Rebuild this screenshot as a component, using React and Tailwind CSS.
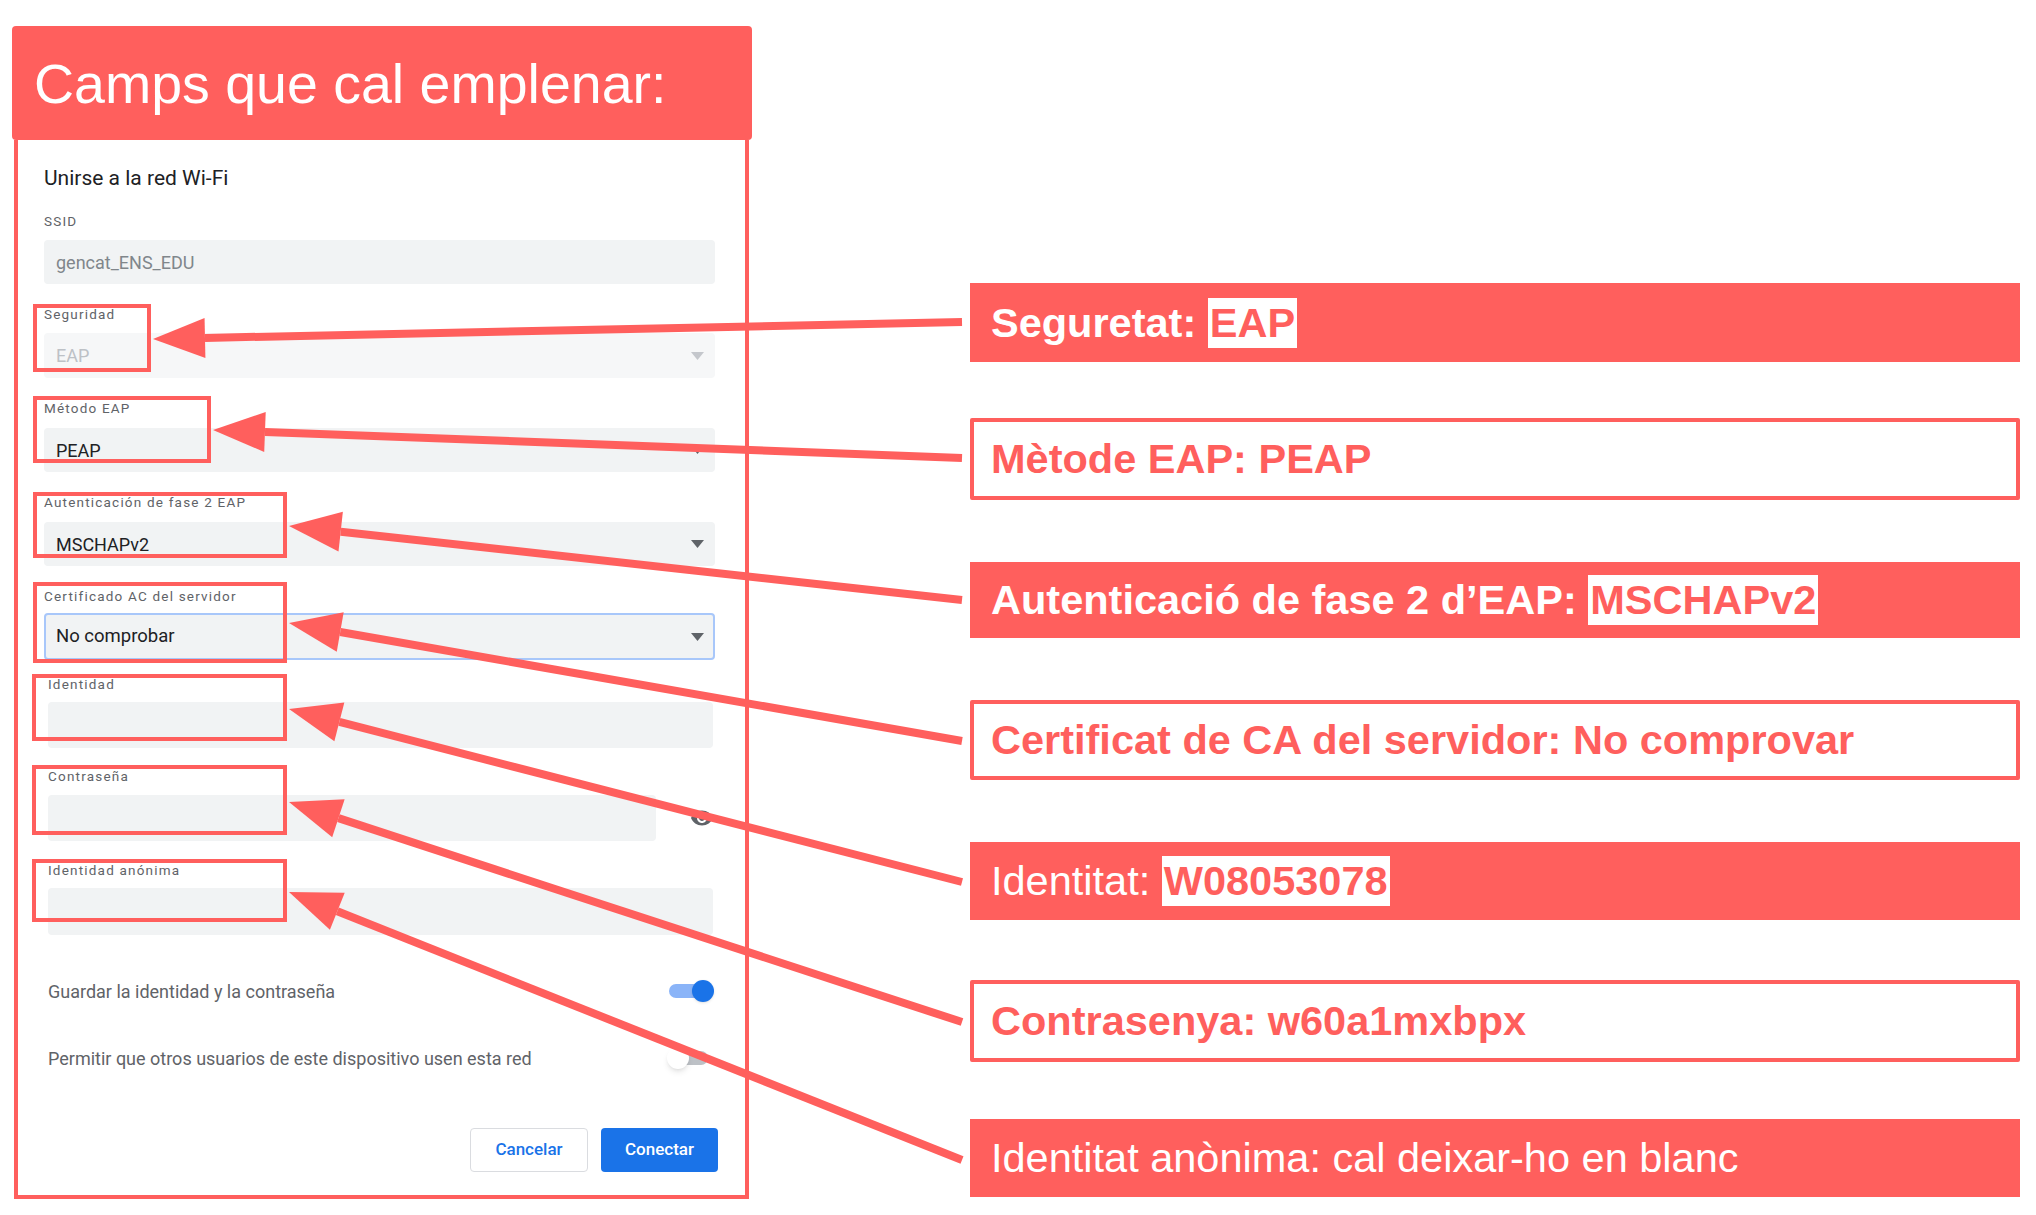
import React from 'react';

const RED = '#ff5f5d';

// callouts on the right: kind = filled | outlined
const callouts = [
  { h: 79, mt: 283, filled: true, label: 'Seguretat:', value: 'EAP', bold: true },
  { h: 82, mt: 56, filled: false, label: 'Mètode EAP:', value: 'PEAP', bold: true },
  { h: 76, mt: 62, filled: true, label: 'Autenticació de fase 2 d’EAP:', value: 'MSCHAPv2', bold: true },
  { h: 80, mt: 62, filled: false, label: 'Certificat de CA del servidor:', value: 'No comprovar', bold: true },
  { h: 78, mt: 62, filled: true, label: 'Identitat:', value: 'W08053078', bold: false },
  { h: 82, mt: 60, filled: false, label: 'Contrasenya:', value: 'w60a1mxbpx', bold: true },
  { h: 78, mt: 57, filled: true, label: 'Identitat anònima: cal deixar-ho en blanc', value: null, bold: false },
];

// arrows: start at callout edge, tip at the red label box
const arrows = [
  [962, 322, 153, 339],
  [962, 458, 213, 430],
  [962, 600, 289, 526],
  [962, 741, 289, 623],
  [962, 882, 289, 709],
  [962, 1022, 289, 802],
  [962, 1160, 289, 892],
];

const boxes = [
  [33, 304, 151, 372],
  [33, 396, 211, 463],
  [33, 492, 287, 558],
  [33, 582, 287, 663],
  [32, 674, 287, 741],
  [32, 765, 287, 835],
  [32, 859, 287, 922],
];

function Chevron({ light }) {
  return (
    <svg width="13" height="8" viewBox="0 0 13 8">
      <path d="M0 0h13L6.5 8z" fill={light ? '#c4c7cc' : '#5f6368'} />
    </svg>
  );
}

function Label({ children, className = '' }) {
  return (
    <div className={`text-[13.5px] leading-[16px] tracking-[1.2px] text-[#5f6368] ${className}`}>
      {children}
    </div>
  );
}

function Annotations() {
  return (
    <svg className="absolute inset-0 pointer-events-none" width="2036" height="1215" viewBox="0 0 2036 1215">
      {boxes.map(([x1, y1, x2, y2], i) => (
        <rect key={i} x={x1 + 2} y={y1 + 2} width={x2 - x1 - 4} height={y2 - y1 - 4} fill="none" stroke={RED} strokeWidth="4" />
      ))}
      {arrows.map(([sx, sy, tx, ty], i) => {
        const dx = sx - tx;
        const dy = sy - ty;
        const len = Math.hypot(dx, dy);
        const ux = dx / len;
        const uy = dy / len;
        const bx = tx + ux * 52;
        const by = ty + uy * 52;
        const px = -uy * 20;
        const py = ux * 20;
        return (
          <g key={i}>
            <line x1={sx} y1={sy} x2={bx} y2={by} stroke={RED} strokeWidth="8" />
            <polygon points={`${tx},${ty} ${bx + px},${by + py} ${bx - px},${by - py}`} fill={RED} />
          </g>
        );
      })}
    </svg>
  );
}

export default function App() {
  return (
    <div className="relative w-[2036px] h-[1215px] bg-white overflow-hidden flex">
      {/* Left: header + dialog */}
      <div className="w-[752px] shrink-0 pl-[12px] pt-[26px]">
        <div className="w-[740px] h-[114px] rounded-[4px] bg-[#ff5f5d] flex items-center pl-[22px] pt-[3px]">
          <span className="text-white text-[55.5px] leading-none font-['Liberation_Sans',Arial,sans-serif]">
            Camps que cal emplenar:
          </span>
        </div>

        <div className="ml-[2px] w-[735px] h-[1059px] border-x-4 border-b-4 border-[#ff5f5d] font-['Roboto',sans-serif] pt-[26px]">
          <div className="pl-[26px] pr-[30px]">
            <div className="text-[21px] leading-[24px] text-[#202124]">Unirse a la red Wi-Fi</div>

            <Label className="mt-[23px]">SSID</Label>
            <div className="mt-[11px] h-[44px] rounded-[4px] bg-[#f1f3f4] flex items-center pl-[12px] text-[18px] text-[#80868b]">
              gencat_ENS_EDU
            </div>

            <Label className="mt-[22px]">Seguridad</Label>
            <div className="mt-[11px] h-[45px] rounded-[4px] bg-[#f6f7f8] flex items-center justify-between pl-[12px] pr-[11px] text-[18px] text-[#bdc1c6]">
              <span>EAP</span>
              <Chevron light />
            </div>

            <Label className="mt-[22px]">Método EAP</Label>
            <div className="mt-[12px] h-[44px] rounded-[4px] bg-[#f1f3f4] flex items-center justify-between pl-[12px] pr-[11px] text-[18px] text-[#202124]">
              <span>PEAP</span>
              <Chevron />
            </div>

            <Label className="mt-[22px]">Autenticación de fase 2 EAP</Label>
            <div className="mt-[12px] h-[44px] rounded-[4px] bg-[#f1f3f4] flex items-center justify-between pl-[12px] pr-[11px] text-[18px] text-[#202124]">
              <span>MSCHAPv2</span>
              <Chevron />
            </div>

            <Label className="mt-[22px]">Certificado AC del servidor</Label>
            <div className="mt-[9px] h-[47px] rounded-[4px] bg-[#f1f3f4] border-2 border-[#a8c7fa] flex items-center justify-between pl-[10px] pr-[9px] text-[18.5px] text-[#202124]">
              <span>No comprobar</span>
              <Chevron />
            </div>
          </div>

          <div className="pl-[30px] pr-[32px]">
            <Label className="mt-[16px]">Identidad</Label>
            <div className="mt-[10px] h-[46px] rounded-[4px] bg-[#f1f3f4]" />

            <Label className="mt-[20px]">Contraseña</Label>
            <div className="mt-[11px] h-[46px] flex items-center gap-[34px]">
              <div className="flex-1 h-full rounded-[4px] bg-[#f1f3f4]" />
              <svg width="24" height="24" viewBox="0 0 24 24" className="mr-[-1px]">
                <path
                  fill="#5f6368"
                  d="M12 4.5C7 4.5 2.73 7.61 1 12c1.73 4.39 6 7.5 11 7.5s9.27-3.11 11-7.5c-1.73-4.39-6-7.5-11-7.5zM12 17c-2.76 0-5-2.24-5-5s2.24-5 5-5 5 2.24 5 5-2.24 5-5 5zm0-8c-1.66 0-3 1.34-3 3s1.34 3 3 3 3-1.34 3-3-1.34-3-3-3z"
                />
              </svg>
            </div>

            <Label className="mt-[21px]">Identidad anónima</Label>
            <div className="mt-[10px] h-[47px] rounded-[4px] bg-[#f1f3f4]" />

            <div className="mt-[44px] h-[24px] flex items-center justify-between text-[18px] text-[#5f6368]">
              <span>Guardar la identidad y la contraseña</span>
              <div className="relative w-[44px] h-[14px] rounded-full bg-[#8ab4f8]">
                <div className="absolute right-[-1px] top-[-4px] w-[22px] h-[22px] rounded-full bg-[#1a73e8] shadow" />
              </div>
            </div>

            <div className="mt-[43px] h-[24px] flex items-center justify-between text-[18px] text-[#5f6368]">
              <span>Permitir que otros usuarios de este dispositivo usen esta red</span>
              <div className="relative w-[38px] h-[14px] rounded-full bg-[#bdc1c6] mr-[5px]">
                <div className="absolute left-[-3px] top-[-4px] w-[22px] h-[22px] rounded-full bg-white shadow-md" />
              </div>
            </div>
          </div>

          <div className="mt-[58px] flex justify-end gap-[13px] pr-[27px]">
            <button className="w-[118px] h-[44px] rounded-[4px] border border-[#dadce0] bg-white text-[17px] font-medium text-[#1a73e8]">
              Cancelar
            </button>
            <button className="w-[117px] h-[44px] rounded-[4px] bg-[#1a73e8] text-[17px] font-medium text-white">
              Conectar
            </button>
          </div>
        </div>
      </div>

      {/* Right: callouts */}
      <div className="ml-[218px] w-[1050px] flex flex-col font-['Liberation_Sans',Arial,sans-serif]">
        {callouts.map((c, i) => (
          <div
            key={i}
            style={{ height: c.h, marginTop: c.mt }}
            className={
              c.filled
                ? 'bg-[#ff5f5d] text-white flex items-center pl-[21px] text-[41.5px] leading-none'
                : 'border-4 border-[#ff5f5d] rounded-[2px] text-[#ff5f5d] flex items-center pl-[17px] text-[41.5px] leading-none'
            }
          >
            <span className={c.bold ? 'font-bold whitespace-pre' : 'whitespace-pre'}>
              {c.label}
              {c.value && ' '}
            </span>
            {c.value && (
              <span
                className={
                  c.filled
                    ? 'bg-white text-[#ff5f5d] font-bold px-[2px] h-[50px] flex items-center'
                    : 'font-bold'
                }
              >
                {c.value}
              </span>
            )}
          </div>
        ))}
      </div>

      <Annotations />
    </div>
  );
}
